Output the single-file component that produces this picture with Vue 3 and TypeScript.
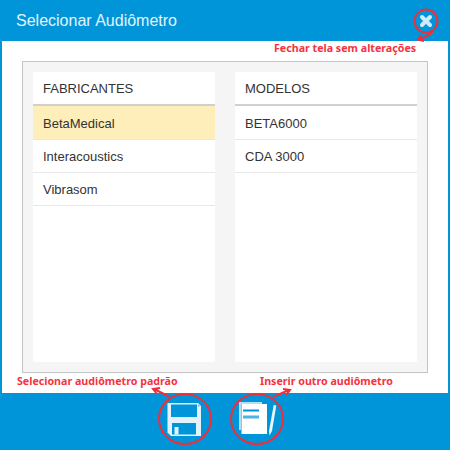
<template>
  <div class="dialog">
    <header class="title-bar">
      <span class="title">Selecionar Audiômetro</span>
      <button class="close" type="button" aria-label="Fechar">
        <svg width="16" height="16" viewBox="0 0 16 16">
          <path d="M4 4 12 12M12 4 4 12" stroke="#cfeaf8" stroke-width="4" stroke-linecap="round" />
        </svg>
      </button>
    </header>

    <main class="body">
      <div class="panel">
        <section v-for="col in columns" :key="col.title" class="column">
          <h2 class="column-title">{{ col.title }}</h2>
          <ul class="list">
            <li v-for="item in col.items" :key="item" class="row" :class="{ selected: item === selected }">
              {{ item }}
            </li>
          </ul>
        </section>
      </div>
    </main>

    <footer class="actions">
      <button class="action" type="button" aria-label="Selecionar audiômetro padrão">
        <svg width="34" height="34" viewBox="0 0 34 34">
          <path fill="#e4f3fb" d="M0.500 0H31L34 3V33H4L0.500 29.500Z" />
          <rect x="4" y="1.500" width="26" height="12.500" fill="#0095d9" />
          <rect x="5" y="20" width="24" height="11.500" fill="#0095d9" />
          <rect x="7.500" y="24" width="4" height="7.500" fill="#e4f3fb" />
          <rect x="31" y="2" width="1.500" height="1.500" fill="#5db9e6" />
        </svg>
      </button>
      <button class="action" type="button" aria-label="Inserir outro audiômetro">
        <svg width="40" height="38" viewBox="0 0 40 38">
          <path d="M1 29V1H24V3H3V29Z" fill="#b5def3" />
          <rect x="3.500" y="3" width="25.500" height="30" fill="#fff" />
          <rect x="5" y="8.500" width="16" height="2" fill="#0095d9" />
          <rect x="5" y="14.500" width="16" height="3" fill="#4eb4e4" />
          <path d="M35.700 4 38.300 4.500 34 30 31.500 34.500 31 30Z" fill="#eaf6fc" />
        </svg>
      </button>
    </footer>

    <div class="note note-close">Fechar tela sem alterações</div>
    <div class="note note-default">Selecionar audiômetro padrão</div>
    <div class="note note-insert">Inserir outro audiômetro</div>

    <svg class="marks" width="450" height="450" viewBox="0 0 450 450" fill="none" stroke="#ee2f3a" stroke-width="2">
      <circle cx="426" cy="21" r="11.500" />
      <path d="M433 31Q428 37 419 39M421 35 418 39.500 424 41" />
      <ellipse cx="185" cy="419" rx="26" ry="25" />
      <path d="M170 397 154 389M160 388 153 389 157 394" />
      <ellipse cx="257" cy="419" rx="26" ry="25" />
      <path d="M273 397 289 390M283 389 290 390 286 395" />
    </svg>
  </div>
</template>

<script setup lang="ts">
interface Column {
  title: string;
  items: Array<string>;
}

const selected = "BetaMedical";

const columns: Array<Column> = [
  { title: "FABRICANTES", items: ["BetaMedical", "Interacoustics", "Vibrasom"] },
  { title: "MODELOS", items: ["BETA6000", "CDA 3000"] },
];
</script>

<style scoped>
.dialog {
  position: relative;
  width: 450px;
  height: 450px;
  display: flex;
  flex-direction: column;
  background: #0095d9;
  font-family: "Liberation Sans", Arial, sans-serif;
  overflow: hidden;
}

.title-bar {
  height: 41px;
  display: flex;
  align-items: center;
  justify-content: space-between;
  padding: 0 16px;
  box-sizing: border-box;
}

.title {
  font-size: 16px;
  color: #e3f3fb;
}

.close {
  width: 16px;
  height: 16px;
  padding: 0;
  border: 0;
  background: none;
  display: flex;
}

.body {
  height: 352px;
  margin: 0 2px;
  padding: 20px;
  box-sizing: border-box;
  background: #fff;
}

.panel {
  height: 100%;
  box-sizing: border-box;
  display: grid;
  grid-template-columns: 182px 182px;
  gap: 20px;
  padding: 10px;
  border: 1px solid #c4c4c4;
  background: #f5f5f5;
}

.column {
  background: #fff;
}

.column-title {
  height: 34px;
  margin: 0;
  padding: 0 10px;
  font-size: 13px;
  font-weight: 400;
  line-height: 34px;
  color: #333;
  border-bottom: 2px solid #d0d0d0;
  box-sizing: border-box;
}

.list {
  margin: 0;
  padding: 0;
  list-style: none;
}

.row {
  height: 33px;
  padding: 0 10px;
  box-sizing: border-box;
  font-size: 13px;
  line-height: 33px;
  color: #333;
  border-bottom: 1px solid #e8e8e8;
}

.row:first-child {
  height: 34px;
  line-height: 35px;
}

.row.selected {
  background: #feeeba;
}

.actions {
  flex: 1;
  display: flex;
  justify-content: center;
  gap: 37px;
  align-items: center;
  padding: 0 5px 3px 0;
}

.action {
  padding: 0;
  border: 0;
  background: none;
  display: flex;
}

.note {
  position: absolute;
  font-family: "Noto Sans", sans-serif;
  font-size: 10.67px;
  font-weight: 700;
  line-height: 14px;
  color: #f5333f;
  white-space: nowrap;
}

.note-close {
  top: 41px;
  left: 274px;
}

.note-default {
  top: 374px;
  left: 17px;
}

.note-insert {
  top: 374px;
  left: 260px;
}

.marks {
  position: absolute;
  top: 0;
  left: 0;
  pointer-events: none;
}
</style>
